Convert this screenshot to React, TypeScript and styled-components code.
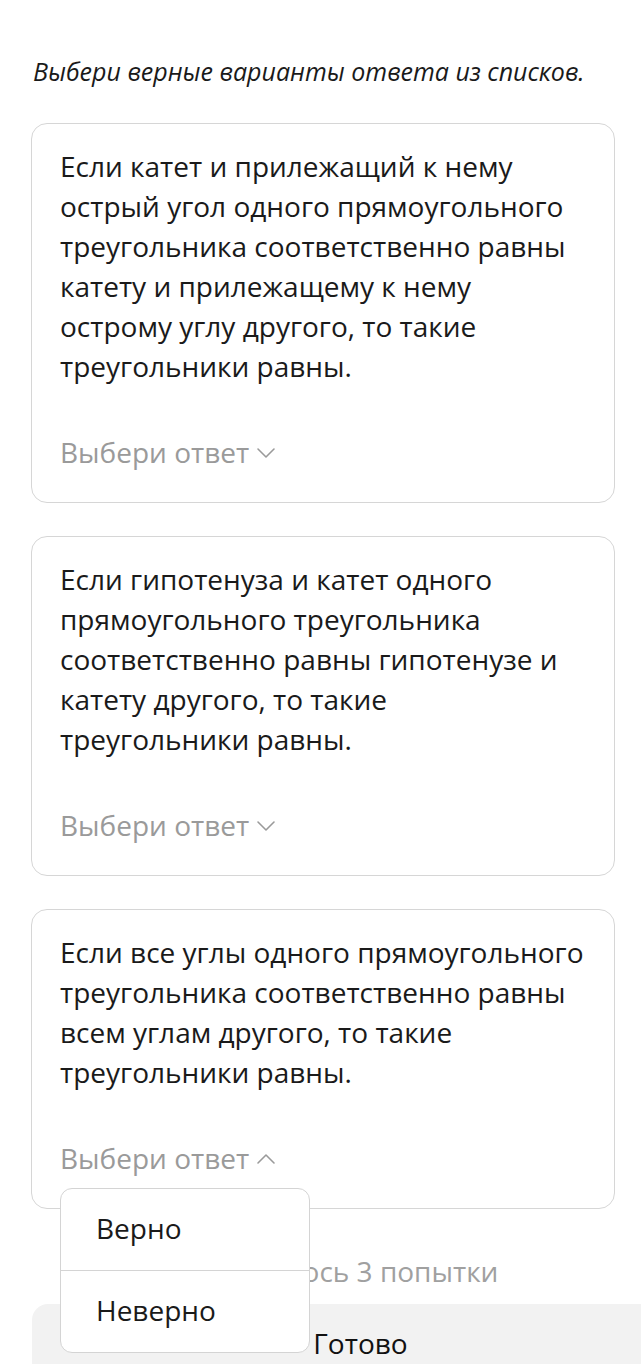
import { createGlobalStyle, styled } from "styled-components";

const GlobalStyle = createGlobalStyle`
  html, body {
    margin: 0;
    padding: 0;
    background: #ffffff;
    overflow-x: hidden;
  }
  body {
    font-family: "Open Sans", "Noto Sans", sans-serif;
    color: #1a1a1a;
  }
`;

// строки разбиты так же, как в макете
const questions = [
  {
    lines: [
      "Если катет и прилежащий к нему",
      "острый угол одного прямоугольного",
      "треугольника соответственно равны",
      "катету и прилежащему к нему",
      "острому углу другого, то такие",
      "треугольники равны.",
    ],
    open: false,
  },
  {
    lines: [
      "Если гипотенуза и катет одного",
      "прямоугольного треугольника",
      "соответственно равны гипотенузе и",
      "катету другого, то такие",
      "треугольники равны.",
    ],
    open: false,
  },
  {
    lines: [
      "Если все углы одного прямоугольного",
      "треугольника соответственно равны",
      "всем углам другого, то такие",
      "треугольники равны.",
    ],
    open: true,
  },
];

const Chevron = ({ up }: { up: boolean }) => (
  <ChevronSvg width="20" height="12" viewBox="0 0 20 12">
    <polyline
      points={up ? "2,10 10,2 18,10" : "2,2 10,10 18,2"}
      fill="none"
      stroke="#9a9a9a"
      strokeWidth="1.6"
      strokeLinecap="round"
      strokeLinejoin="round"
    />
  </ChevronSvg>
);

const App = () => {
  return (
    <Page>
      <GlobalStyle />
      <Title>Выбери верные варианты ответа из списков.</Title>
      <CardList>
        {questions.map((q, i) => (
          <Card key={i}>
            <Statement>{q.lines.join("\n")}</Statement>
            <AnswerRow>
              <AnswerLabel>Выбери ответ</AnswerLabel>
              <Chevron up={q.open} />
              {q.open && (
                <Dropdown>
                  <Option>Верно</Option>
                  <Divider />
                  <Option>Неверно</Option>
                </Dropdown>
              )}
            </AnswerRow>
          </Card>
        ))}
      </CardList>
      <Footer>
        <Attempts>Осталось 3 попытки</Attempts>
        <DoneButton>Готово</DoneButton>
      </Footer>
    </Page>
  );
};

export default App;

const Page = styled.div`
  padding: 55px 26px 0 31px;
  width: 641px;
  box-sizing: border-box;
  height: 1364px;
  overflow: hidden;
`;

const Title = styled.div`
  font-size: 25px;
  font-style: italic;
  line-height: 32px;
  margin-left: 2px;
  color: #1a1a1a;
  margin-bottom: 36px;
  white-space: nowrap;
`;

const CardList = styled.div`
  display: flex;
  flex-direction: column;
  gap: 33px;
`;

const Card = styled.div`
  border: 1.5px solid #d6d6d6;
  border-radius: 16px;
  padding: 22px 20px 30px 28px;
  background: #ffffff;
`;

const Statement = styled.div`
  font-size: 28px;
  line-height: 40px;
  color: #1a1a1a;
  white-space: pre-line;
`;

const AnswerRow = styled.div`
  position: relative;
  margin-top: 46px;
  display: flex;
  align-items: center;
  gap: 7px;
  height: 40px;
`;

const AnswerLabel = styled.span`
  font-size: 28px;
  line-height: 40px;
  color: #9a9a9a;
`;

const ChevronSvg = styled.svg`
  display: block;
  margin-top: 2px;
`;

const Dropdown = styled.div`
  position: absolute;
  top: 50px;
  left: 0;
  width: 250px;
  background: #ffffff;
  border: 1px solid #d4d4d4;
  border-radius: 12px;
  z-index: 2;
  box-sizing: border-box;
`;

const Option = styled.div`
  font-size: 28px;
  line-height: 40px;
  padding: 19px 35px 22px;
  color: #1a1a1a;
`;

const Divider = styled.div`
  height: 1px;
  background: #d4d4d4;
`;

const Footer = styled.div`
  margin-top: 42px;
  margin-left: 1px;
  margin-right: -74px;
  display: flex;
  flex-direction: column;
  align-items: stretch;
`;

const Attempts = styled.div`
  text-align: center;
  font-size: 28px;
  line-height: 40px;
  color: #a0a0a0;
`;

const DoneButton = styled.div`
  margin-top: 13px;
  background: #f2f2f2;
  border-radius: 16px 16px 0 0;
  padding-top: 21px;
  height: 80px;
  text-align: center;
  font-size: 28px;
  line-height: 36px;
  color: #111111;
`;
